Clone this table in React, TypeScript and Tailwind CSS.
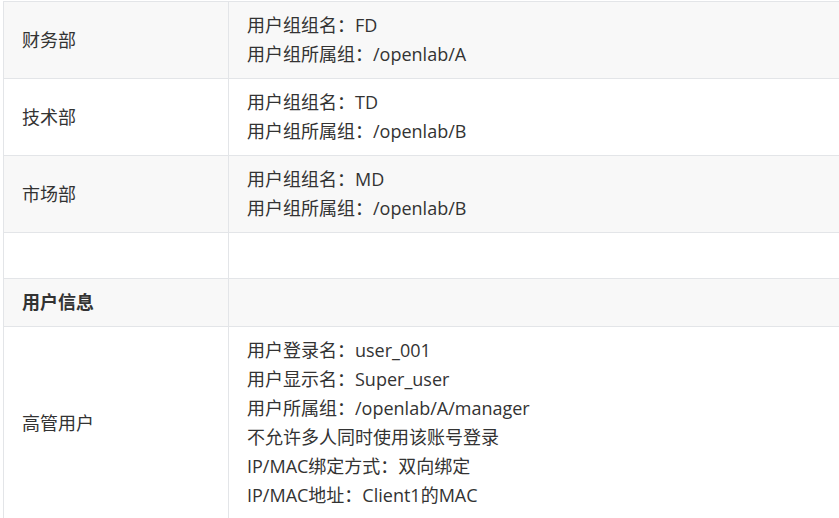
const rows: { label: string; lines: string[]; bold?: boolean }[] = [
  { label: '财务部', lines: ['用户组组名：FD', '用户组所属组：/openlab/A'] },
  { label: '技术部', lines: ['用户组组名：TD', '用户组所属组：/openlab/B'] },
  { label: '市场部', lines: ['用户组组名：MD', '用户组所属组：/openlab/B'] },
  { label: '', lines: [] },
  { label: '用户信息', lines: [], bold: true },
  {
    label: '高管用户',
    lines: [
      '用户登录名：user_001',
      '用户显示名：Super_user',
      '用户所属组：/openlab/A/manager',
      '不允许多人同时使用该账号登录',
      'IP/MAC绑定方式：双向绑定',
      'IP/MAC地址：Client1的MAC',
    ],
  },
];

export default function App() {
  return (
    <div
      className="w-[839px] h-[518px] overflow-hidden bg-white pt-px pl-[3px] text-[18px] leading-[29px] text-[#333]"
      style={{ fontFamily: '"Open Sans", "Noto Sans CJK SC", sans-serif' }}
    >
      <table className="w-[840px] border-collapse">
        <tbody>
          {rows.map((r, i) => {
            const empty = !r.label && !r.lines.length;
            return (
              <tr key={i} className={i % 2 === 0 ? 'bg-[#f8f8f8]' : 'bg-white'}>
                <td
                  className={
                    'w-[225px] border border-[#e3e5e8] px-[18px] py-[9px] align-middle ' +
                    (r.bold ? 'font-bold ' : '') +
                    (empty ? 'leading-[27px]' : '')
                  }
                >
                  {r.label || '\u00a0'}
                </td>
                <td
                  className={
                    'border border-[#e3e5e8] px-[18px] py-[9px] align-middle ' +
                    (empty ? 'leading-[27px]' : '')
                  }
                >
                  {r.lines.length ? r.lines.map((l, j) => <div key={j}>{l}</div>) : '\u00a0'}
                </td>
              </tr>
            );
          })}
        </tbody>
      </table>
    </div>
  );
}
